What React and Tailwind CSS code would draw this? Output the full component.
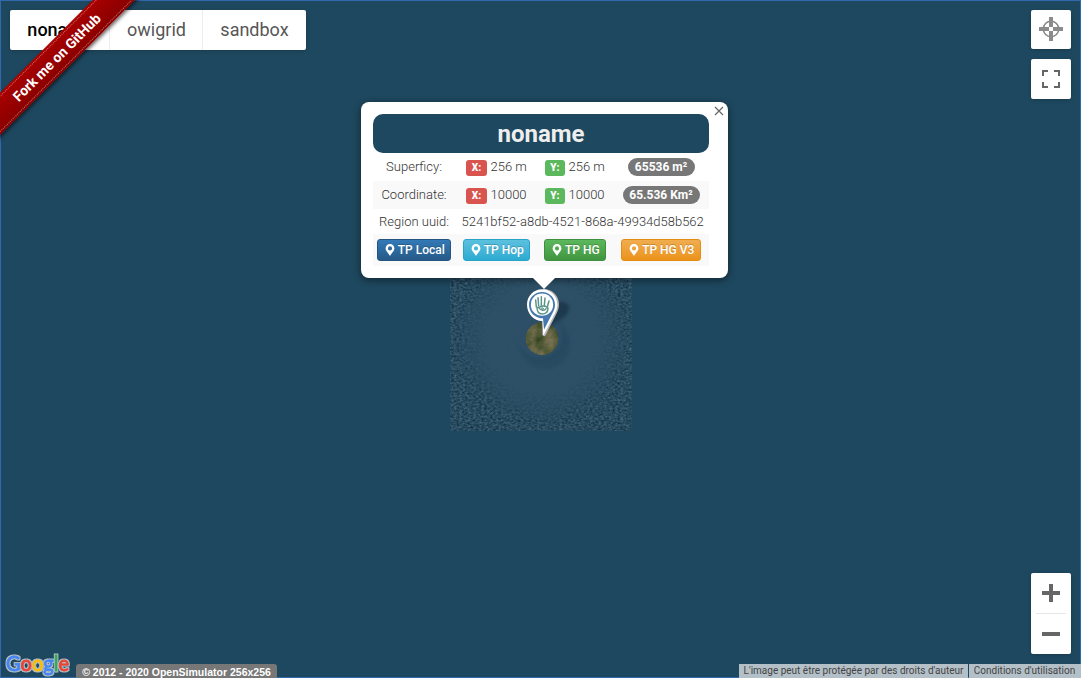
import React from "react";

const tabs = [
  { name: "noname", cls: "w-[99px] pl-px font-medium text-black" },
  { name: "owigrid", cls: "w-[93px] pl-px border-l border-[#ececec] text-[#565656]" },
  { name: "sandbox", cls: "w-[104px] border-l border-[#ececec] text-[#565656]" },
];

function MapTile() {
  return (
    <svg className="absolute left-[440px] top-[270px]" width="200" height="170" viewBox="0 0 600 510">
      <defs>
        <filter id="waves" x="0" y="0" width="100%" height="100%" colorInterpolationFilters="sRGB">
          <feTurbulence type="fractalNoise" baseFrequency="0.12 0.16" numOctaves="3" seed="8" result="n" />
          <feColorMatrix in="n" type="matrix" values="0.62 0 0 0 -0.13  0.62 0 0 0 0.0  0.62 0 0 0 0.08  0 0 0 0 1" />
        </filter>
        <filter id="ground" x="0" y="0" width="100%" height="100%" colorInterpolationFilters="sRGB">
          <feTurbulence type="fractalNoise" baseFrequency="0.035" numOctaves="4" seed="4" />
          <feColorMatrix type="matrix" values="0.4 0 0 0 0.16  0.25 0 0 0 0.25  0.3 0 0 0 0.09  0 0 0 0 1" />
        </filter>
        <filter id="soft"><feGaussianBlur stdDeviation="4" /></filter>
        <radialGradient id="shallow">
          <stop offset="0" stopColor="#2d5067" />
          <stop offset="0.6" stopColor="#2d5067" stopOpacity="0.95" />
          <stop offset="0.8" stopColor="#2a4d63" stopOpacity="0.65" />
          <stop offset="1" stopColor="#24485f" stopOpacity="0" />
        </radialGradient>
        <clipPath id="island"><circle cx="306" cy="206" r="49" /></clipPath>
      </defs>
      <rect x="30" y="0" width="546" height="483" fill="#25495e" />
      <rect x="30" y="0" width="546" height="483" filter="url(#waves)" opacity="0.5" />
      <ellipse cx="306" cy="202" rx="272" ry="270" fill="url(#shallow)" />
      <circle cx="314" cy="220" r="77" fill="#28485e" opacity="0.75" filter="url(#soft)" />
      <circle cx="298" cy="195" r="68" fill="#2d5067" opacity="0.9" filter="url(#soft)" />
      <g clipPath="url(#island)">
        <rect x="250" y="150" width="112" height="112" filter="url(#ground)" />
      </g>
      <path d="M343 101c12-10 34-8 42 4 7 12-2 31-20 42-13 8-24 13-33 24l-16 13 22-54z" fill="#152d40" opacity="0.65" filter="url(#soft)" />
      <path d="M310 57c27 0 47 20 47 46 0 10-3 20-8 29l-34 67-8-3z" fill="#b7b8b9" />
      <path d="M306 58c26 0 46 20 46 46 0 9-3 18-7 26l-35 67-3-44c-26 0-46-22-46-49 0-26 20-46 45-46z" fill="#fff" />
      <path d="M306 66c22 0 39 17 39 38 0 9-3 17-7 24l-26 51-3-34c-24 0-42-18-42-41 0-21 17-38 39-38z" fill="#4478ae" />
      <circle cx="306" cy="104" r="33.5" fill="#fff" />
      <g fill="none" stroke="#5b9589" strokeLinecap="round">
        <path d="M289 111l-2-21m9 18-2-25m10 24V80m9 27 2-23m7 26 5-17" strokeWidth="4.5" />
        <path d="M291 111c0 14 4 21 15 21 12 0 18-8 18-18-7-8-20-8-28-1 7 10 18 10 22 3" strokeWidth="4.5" />
        <circle cx="307" cy="116" r="3" strokeWidth="3" />
      </g>
    </svg>
  );
}

function Pin() {
  return (
    <svg width="10" height="12" viewBox="0 0 9 12" className="mr-[3px] mt-[-1px]">
      <path fillRule="evenodd" fill="#fff" d="M4.5 0A4.4 4.4 0 0 0 .1 4.4C.1 7 3 8.8 4.5 12 6 8.8 8.9 7 8.9 4.4A4.4 4.4 0 0 0 4.5 0Zm0 2.3a2.1 2.1 0 1 1 0 4.2 2.1 2.1 0 0 1 0-4.2Z" />
    </svg>
  );
}

function Label({ children, color }) {
  return (
    <span className={`mt-px flex h-4 items-center justify-center rounded-[3px] text-[10px] font-black text-white ${color}`}>
      {children}
    </span>
  );
}

function DataRow({ title, x, y, total, shade, badge }) {
  return (
    <div className={`grid h-7 grid-cols-[82px_83px_76px_95px] items-center text-[13px] font-light text-[#333] ${shade}`}>
      <div className="pb-px text-center">{title}</div>
      <div className="flex items-center gap-[3.5px] pl-[11px]"><Label color="w-[21px] bg-[#d9534f]">X:</Label><span className="pb-px">{x}</span></div>
      <div className="flex items-center gap-[3.5px] pl-[7px]"><Label color="w-[20px] bg-[#5cb85c]">Y:</Label><span className="pb-px">{y}</span></div>
      <div className={`mr-px flex h-[18px] items-center justify-center justify-self-center rounded-full bg-[#777] text-[12px] font-bold text-white ${badge}`}>{total}</div>
    </div>
  );
}

function Teleport({ children, cls }) {
  return (
    <button className={`flex h-[22px] items-center justify-center rounded-[3px] border pl-[1.5px] text-[12px] font-medium text-white [text-shadow:0_-1px_0_rgba(0,0,0,0.2)] ${cls}`}>
      <Pin />{children}
    </button>
  );
}

function RegionPopup() {
  return (
    <>
      <div className="absolute left-[360.5px] top-[102px] h-44 w-[367px] rounded-lg bg-white pl-[12.5px] pt-3 shadow-[0_2px_7px_1px_rgba(0,0,0,0.4)]">
        <div className="w-[336px]">
          <h1 className="flex h-[39px] items-center justify-center rounded-[10px] bg-[#1e485f] text-[24px] font-bold text-[#eee]">noname</h1>
          <DataRow title="Superficy:" x="256 m" y="256 m" total="65536 m²" shade="" badge="w-[67px]" />
          <DataRow title="Coordinate:" x="10000" y="10000" total="65.536 Km²" shade="bg-[#f9f9f9]" badge="w-[77px]" />
          <div className="grid h-[25px] grid-cols-[82px_254px] items-center text-[13px] font-light text-[#333]">
            <div className="text-center">Region uuid:</div>
            <div className="whitespace-nowrap pl-[6.5px]">5241bf52-a8db-4521-868a-49934d58b562</div>
          </div>
          <div className="flex h-8 items-center bg-[#f9f9f9] pl-1">
            <Teleport cls="w-[74px] border-[#245580] bg-linear-to-b from-[#337ab7] to-[#265a88]">TP Local</Teleport>
            <Teleport cls="ml-[12px] w-[67px] border-[#28a4c9] bg-linear-to-b from-[#5bc0de] to-[#2aabd2]">TP Hop</Teleport>
            <Teleport cls="ml-[14px] w-[62px] border-[#3e8f3e] bg-linear-to-b from-[#5cb85c] to-[#419641]">TP HG</Teleport>
            <Teleport cls="ml-[15px] w-[80px] border-[#e38d13] bg-linear-to-b from-[#f0ad4e] to-[#eb9316]">TP HG V3</Teleport>
          </div>
        </div>
        <svg className="absolute right-[4px] top-[4px]" width="10" height="10" viewBox="0 0 10 10">
          <path d="m1 1 8 8m0-8-8 8" stroke="#666" strokeWidth="1.2" />
        </svg>
      </div>
      <svg className="absolute left-[533px] top-[277px]" width="22" height="12" viewBox="0 0 22 12">
        <path d="M0 0h22v1L11 12 0 1z" fill="#fff" />
      </svg>
    </>
  );
}

const googleLetters = [
  ["G", "#4285f4"], ["o", "#ea4335"], ["o", "#fbbc05"], ["g", "#4285f4"], ["l", "#34a853"], ["e", "#ea4335"],
];

export default function App() {
  return (
    <main className="relative h-[678px] w-[1081px] overflow-hidden bg-[#1e485f] font-[Roboto,sans-serif] leading-none">
      <MapTile />
      <RegionPopup />
      <div className="pointer-events-none absolute inset-0 border border-[#3269ad]" />

      <nav className="absolute left-[10px] top-[10px] flex h-10 overflow-hidden rounded-[2px] bg-white text-[18px] shadow-[0_1px_4px_-1px_rgba(0,0,0,0.3)]">
        {tabs.map((t) => (
          <button key={t.name} className={`flex items-center justify-center ${t.cls}`}>{t.name}</button>
        ))}
      </nav>

      <div className="absolute left-[-63px] top-[42px] flex h-[30px] w-[240px] -rotate-45 items-center bg-linear-to-b from-[#aa0000] to-[#880000] shadow-[0_2px_4px_rgba(0,0,0,0.6)]">
        <div className="flex h-[26px] w-full items-center justify-center border-y border-dotted border-white/45 pr-px text-[14px] font-bold text-white">
          Fork me on GitHub
        </div>
      </div>

      <div className="absolute right-[10px] top-[10px] flex flex-col gap-[10px]">
        <button className="flex h-[39px] w-10 items-start justify-center rounded-[2px] bg-white pt-[7px] shadow-[0_1px_4px_-1px_rgba(0,0,0,0.3)]">
          <svg width="24" height="24" viewBox="0 0 24 24">
            <circle cx="12" cy="12" r="7.7" fill="none" stroke="#888" strokeWidth="1.6" />
            <path d="M10 0h4v10h-4zm0 14h4v10h-4zM0 10h10v4H0zm14 0h10v4H14z" fill="#8b8b8b" />
          </svg>
        </button>
        <button className="flex h-10 w-10 items-center justify-center rounded-[2px] bg-white shadow-[0_1px_4px_-1px_rgba(0,0,0,0.3)]">
          <svg width="18" height="18" viewBox="0 0 18 18">
            <path d="M6 1H1v5m11-5h5v5M1 12v5h5m6 0h5v-5" fill="none" stroke="#666" strokeWidth="2" />
          </svg>
        </button>
      </div>

      <div className="absolute bottom-6 right-[10px] flex h-[81px] w-10 flex-col items-center rounded-[2px] bg-white shadow-[0_1px_4px_-1px_rgba(0,0,0,0.3)]">
        <button className="flex h-10 w-10 items-center justify-center">
          <svg width="18" height="18" viewBox="0 0 18 18"><path d="M7 0h4v7h7v4h-7v7H7v-7H0V7h7z" fill="#666" /></svg>
        </button>
        <div className="h-px w-[30px] bg-[#e6e6e6]" />
        <button className="flex h-10 w-10 items-center justify-center">
          <svg width="18" height="4" viewBox="0 0 18 4"><path d="M0 0h18v4H0z" fill="#666" /></svg>
        </button>
      </div>

      <svg className="absolute left-[4px] top-[651px]" width="70" height="27" viewBox="0 0 70 27">
        <filter id="halo" x="-5%" y="-20%" width="110%" height="140%" colorInterpolationFilters="sRGB">
          <feMorphology in="SourceAlpha" operator="dilate" radius="1" result="wide" />
          <feFlood floodColor="#b5bfc7" />
          <feComposite in2="wide" operator="in" result="edge" />
          <feMerge><feMergeNode in="edge" /><feMergeNode in="SourceGraphic" /></feMerge>
        </filter>
        <text x="2" y="19.5" textLength="63" lengthAdjust="spacingAndGlyphs" fontFamily="Lato, sans-serif" fontSize="20.5" strokeWidth="0.8" filter="url(#halo)">
          {googleLetters.map(([c, color], i) => <tspan key={i} fill={color} stroke={color}>{c}</tspan>)}
        </text>
      </svg>

      <div className="absolute left-[76px] top-[664px] flex h-[14px] w-[201px] items-center justify-center whitespace-nowrap rounded-t-[3px] bg-[#777] pt-[2px] font-['Liberation_Sans',sans-serif] text-[10.5px] font-bold text-white">
        © 2012 - 2020 OpenSimulator 256x256
      </div>
      <div className="absolute bottom-0 right-0 flex h-[14px] gap-px whitespace-nowrap text-[10px] text-[#444]">
        <div className="flex w-[229px] items-center justify-center bg-[#b4c0c8]">L'image peut être protégée par des droits d'auteur</div>
        <div className="flex w-[112px] items-center justify-center bg-[#b4c0c8] pr-px">Conditions d'utilisation</div>
      </div>
    </main>
  );
}
